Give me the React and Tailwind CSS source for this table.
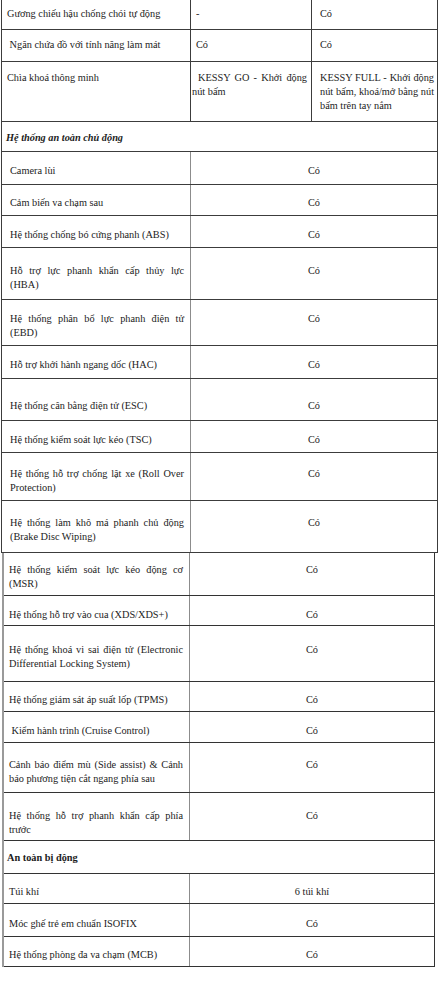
const FONT = { fontFamily: '"Liberation Serif", "Times New Roman", serif' };

const topRows = [
  { label: 'Gương chiếu hậu chống chói tự động', b: '-', c: 'Có', h: 'h-[30px]' },
  { label: '\u00a0Ngăn chứa đồ với tính năng làm mát', b: 'Có', c: 'Có', h: 'h-[32px]' },
];

const activeRows = [
  { label: 'Camera lùi', h: 'h-[33px]' },
  { label: 'Cảm biến va chạm sau', h: 'h-[31px]' },
  { label: 'Hệ thống chống bó cứng phanh (ABS)', h: 'h-[32px]' },
  { label: 'Hỗ trợ lực phanh khẩn cấp thủy lực (HBA)', h: 'h-[52px]', lines: 2, pt: 'pt-[8px]' },
  { label: 'Hệ thống phân bổ lực phanh điện tử (EBD)', h: 'h-[46px]', lines: 2 },
  { label: 'Hỗ trợ khởi hành ngang dốc (HAC)', h: 'h-[33px]' },
  { label: 'Hệ thống cân bằng điện tử (ESC)', h: 'h-[42px]', pt: 'pt-[12px]' },
  { label: 'Hệ thống kiểm soát lực kéo (TSC)', h: 'h-[32px]' },
  { label: 'Hệ thống hỗ trợ chống lật xe (Roll Over Protection)', h: 'h-[48px]', lines: 2, pt: 'pt-[9px]' },
  { label: 'Hệ thống làm khô má phanh chủ động (Brake Disc Wiping)', h: 'h-[52px]', lines: 2 },
];

const lowerRows = [
  { label: 'Hệ thống kiểm soát lực kéo động cơ (MSR)', value: 'Có', h: 'h-[43px]', lines: 2 },
  { label: 'Hệ thống hỗ trợ vào cua (XDS/XDS+)', value: 'Có', h: 'h-[30px]', pt: 'pt-[9px]' },
  { label: 'Hệ thống khoá vi sai điện tử (Electronic Differential Locking System)', value: 'Có', h: 'h-[56px]', lines: 2 },
  { label: 'Hệ thống giám sát áp suất lốp (TPMS)', value: 'Có', h: 'h-[30px]' },
  { label: '\u00a0Kiểm hành trình (Cruise Control)', value: 'Có', h: 'h-[31px]', pt: 'pt-[8px]' },
  { label: 'Cảnh báo điểm mù (Side assist) & Cảnh báo phương tiện cắt ngang phía sau', value: 'Có', h: 'h-[50px]', lines: 2, pt: 'pt-[9px]' },
  { label: 'Hệ thống hỗ trợ phanh khẩn cấp phía trước', value: 'Có', h: 'h-[48px]', lines: 2, pt: 'pt-[12px]' },
  { section: 'An toàn bị động', h: 'h-[33px]' },
  { label: 'Túi khí', value: '6 túi khí', h: 'h-[30px]' },
  { label: 'Móc ghế trẻ em chuẩn ISOFIX', value: 'Có', h: 'h-[33px]', pt: 'pt-[8px]' },
  { label: 'Hệ thống phòng đa va chạm (MCB)', value: 'Có', h: 'h-[30px]' },
];

// value cell mirrors the label's line count so "Có" sits on the first line
const Value = ({ value, lines, pt = 'pt-[6px]' }) => (
  <div className={`flex flex-1 items-center justify-center border-l border-[#8c8c8c] ${pt}`}>
    <div className="text-center">
      <div>{value}</div>
      {lines === 2 && <div className="h-[14px]" />}
    </div>
  </div>
);

const UpperTable = () => (
  <div className="ml-[1px] w-[437px] border-x border-[#3c3c3c]">
    {topRows.map((row) => (
      <div key={row.label} className={`flex ${row.h} border-b border-[#3c3c3c]`}>
        <div className="flex w-[188px] shrink-0 items-center pb-[2px] pl-[5px] pr-[6px]">{row.label}</div>
        <div className="flex w-[121px] shrink-0 items-center border-l border-[#3c3c3c] pb-[2px] pl-[5px]">{row.b}</div>
        <div className="flex flex-1 items-center border-l border-[#3c3c3c] pb-[2px] pl-[8px]">{row.c}</div>
      </div>
    ))}
    <div className="flex h-[60px] border-b border-[#3c3c3c]">
      <div className="w-[188px] shrink-0 pl-[5px] pt-[9px]">Chìa khoá thông minh</div>
      <div className="w-[121px] shrink-0 border-l border-[#3c3c3c] pl-[1px] pr-[4px] pt-[9px] text-justify indent-[6px]">
        KESSY GO - Khởi động nút bấm
      </div>
      <div className="flex-1 border-l border-[#3c3c3c] pl-[8px] pr-[3px] pt-[9px] text-justify">
        KESSY FULL - Khởi động nút bấm, khoá/mở bằng nút bấm trên tay nắm
      </div>
    </div>
    <div className="flex h-[30px] items-center border-b border-[#3c3c3c] pl-[4px] pt-[3px] font-bold italic">
      Hệ thống an toàn chủ động
    </div>
    {activeRows.map((row) => (
      <div key={row.label} className={`flex ${row.h} border-b border-[#3c3c3c]`}>
        <div className={`flex w-[188px] shrink-0 items-center pl-[8px] pr-[6px] ${row.pt || 'pt-[6px]'}`}>
          <p className="w-full text-justify">{row.label}</p>
        </div>
        <Value value="Có" lines={row.lines} pt={row.pt} />
      </div>
    ))}
  </div>
);

const LowerTable = () => (
  <div className="ml-[2px] w-[433px] border-l-2 border-r border-l-[#9a9a9a] border-r-[#333333]">
    {lowerRows.map((row) =>
      row.section ? (
        <div key={row.section} className={`flex ${row.h} items-center border-b border-[#333333] pl-[3px] pt-[2px] font-bold`}>
          {row.section}
        </div>
      ) : (
        <div key={row.label} className={`flex ${row.h} border-b border-[#333333]`}>
          <div className={`flex w-[185px] shrink-0 items-center pl-[5px] pr-[6px] ${row.pt || 'pt-[6px]'}`}>
            <p className="w-full text-justify">{row.label}</p>
          </div>
          <Value value={row.value} lines={row.lines} pt={row.pt} />
        </div>
      )
    )}
  </div>
);

export default function App() {
  return (
    <div className="min-h-screen bg-white text-[10.3px] leading-[14px] text-[#1c1c1c]" style={FONT}>
      <UpperTable />
      <LowerTable />
    </div>
  );
}
